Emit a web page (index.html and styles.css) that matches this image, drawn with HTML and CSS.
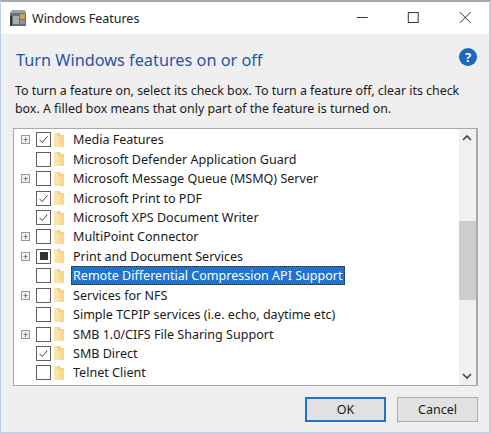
FILE: index.html
```html
<!DOCTYPE html>
<html lang="en">
<head>
<meta charset="utf-8">
<title>Windows Features</title>
<link rel="stylesheet" href="styles.css">
</head>
<body>
<svg class="defs" width="0" height="0" aria-hidden="true">
  <defs>
    <symbol id="folder" viewBox="0 0 12 16">
      <path d="M1 1h6l1 2h3v12H1z" fill="#f3d283"/>
      <path d="M1 1h3v14H1z" fill="#fbe7ae"/>
      <path d="M4 3l3 2v10H4z" fill="#f9e2a2"/>
      <path d="M7 5h4v10H7z" fill="#f6d98f"/>
    </symbol>
  </defs>
</svg>
<div class="window">
  <header class="titlebar">
    <svg class="appicon" viewBox="0 0 18 18">
      <path d="M1 4l2-3h13l1 3z" fill="#98a3b0"/>
      <rect x="1" y="4" width="16" height="13" fill="#6b7076"/>
      <rect x="1" y="7" width="2" height="10" fill="#33373b"/>
      <rect x="4" y="7" width="6" height="8" fill="#a6abb0"/>
      <rect x="11" y="5" width="5" height="5" fill="#d29f52"/>
      <rect x="11" y="11" width="5" height="4" fill="#8d9399"/>
    </svg>
    <span class="title">Windows Features</span>
    <div class="controls">
      <svg class="ctl" viewBox="0 0 52 32"><path d="M22 15.500h11" stroke="#333" fill="none"/></svg>
      <svg class="ctl" viewBox="0 0 52 32"><rect x="22.500" y="10.500" width="10" height="10" stroke="#333" fill="none"/></svg>
      <svg class="ctl" viewBox="0 0 52 32"><path d="M22 10l11 11M33 10l-11 11" stroke="#333" fill="none"/></svg>
    </div>
  </header>
  <main class="content">
    <div class="heading-row">
      <h1 class="heading">Turn Windows features on or off</h1>
      <span class="help">?</span>
    </div>
    <p class="intro">To turn a feature on, select its check box. To turn a feature off, clear its check box. A filled box means that only part of the feature is turned on.</p>
    <div class="tree">
      <ul class="list">
        <li class="row"><span class="exp">+</span><span class="cb on"><svg viewBox="0 0 15 15"><path d="M3 8l3 3 6-7" fill="none" stroke="#333" stroke-width="1.100"/></svg></span><svg class="folder"><use href="#folder"/></svg><span class="label">Media Features</span></li>
        <li class="row"><span class="exp none"></span><span class="cb"></span><svg class="folder"><use href="#folder"/></svg><span class="label">Microsoft Defender Application Guard</span></li>
        <li class="row"><span class="exp">+</span><span class="cb"></span><svg class="folder"><use href="#folder"/></svg><span class="label">Microsoft Message Queue (MSMQ) Server</span></li>
        <li class="row"><span class="exp none"></span><span class="cb on"><svg viewBox="0 0 15 15"><path d="M3 8l3 3 6-7" fill="none" stroke="#333" stroke-width="1.100"/></svg></span><svg class="folder"><use href="#folder"/></svg><span class="label">Microsoft Print to PDF</span></li>
        <li class="row"><span class="exp none"></span><span class="cb on"><svg viewBox="0 0 15 15"><path d="M3 8l3 3 6-7" fill="none" stroke="#333" stroke-width="1.100"/></svg></span><svg class="folder"><use href="#folder"/></svg><span class="label">Microsoft XPS Document Writer</span></li>
        <li class="row"><span class="exp">+</span><span class="cb"></span><svg class="folder"><use href="#folder"/></svg><span class="label">MultiPoint Connector</span></li>
        <li class="row"><span class="exp">+</span><span class="cb part"><i class="fill"></i></span><svg class="folder"><use href="#folder"/></svg><span class="label">Print and Document Services</span></li>
        <li class="row"><span class="exp none"></span><span class="cb"></span><svg class="folder"><use href="#folder"/></svg><span class="label selected">Remote Differential Compression API Support</span></li>
        <li class="row"><span class="exp">+</span><span class="cb"></span><svg class="folder"><use href="#folder"/></svg><span class="label">Services for NFS</span></li>
        <li class="row"><span class="exp none"></span><span class="cb"></span><svg class="folder"><use href="#folder"/></svg><span class="label">Simple TCPIP services (i.e. echo, daytime etc)</span></li>
        <li class="row"><span class="exp">+</span><span class="cb"></span><svg class="folder"><use href="#folder"/></svg><span class="label">SMB 1.0/CIFS File Sharing Support</span></li>
        <li class="row"><span class="exp none"></span><span class="cb on"><svg viewBox="0 0 15 15"><path d="M3 8l3 3 6-7" fill="none" stroke="#333" stroke-width="1.100"/></svg></span><svg class="folder"><use href="#folder"/></svg><span class="label">SMB Direct</span></li>
        <li class="row"><span class="exp none"></span><span class="cb"></span><svg class="folder"><use href="#folder"/></svg><span class="label">Telnet Client</span></li>
        <li class="row"><span class="exp none"></span><span class="cb"></span><svg class="folder"><use href="#folder"/></svg></li>
      </ul>
      <div class="scrollbar">
        <svg class="arrow" viewBox="0 0 16 17"><path d="M4 11l4-4 4 4" fill="none" stroke="#444" stroke-width="1.600"/></svg>
        <div class="track"><div class="thumb"></div></div>
        <svg class="arrow" viewBox="0 0 16 17"><path d="M4 6l4 4 4-4" fill="none" stroke="#444" stroke-width="1.600"/></svg>
      </div>
    </div>
    <div class="buttons">
      <button class="btn default">OK</button>
      <button class="btn">Cancel</button>
    </div>
  </main>
</div>
</body>
</html>
```
FILE: styles.css
```css
* { box-sizing: border-box; }
html, body { margin: 0; padding: 0; width: 491px; height: 434px; overflow: hidden; background: #fff; }
body { font-family: "Noto Sans", "Open Sans", sans-serif; font-size: 12.500px; color: #1a1a1a; }
.defs { position: absolute; }
.window {
  width: 491px; height: 434px; display: flex; flex-direction: column;
  border-top: 2px solid #a9a9a9; border-right: 2px solid #c3d1e6; border-bottom: 2px solid #c3d1e6; border-left: 1px solid #bccdea;
}
.titlebar { height: 32px; flex: none; background: #fff; display: flex; align-items: center; padding-left: 8px; }
.appicon { width: 18px; height: 18px; flex: none; }
.title { margin-left: 5px; font-size: 12.500px; color: #222; }
.controls { margin-left: auto; display: flex; }
.ctl { width: 51.500px; height: 32px; display: block; }
.content { flex: 1; background: #efefef; padding: 0 11px 0 12px; display: flex; flex-direction: column; }
.heading-row { display: flex; align-items: center; justify-content: space-between; height: 42px; padding-top: 6px; }
.heading { margin: 0; font-size: 16.300px; font-weight: 400; color: #1f55a8; padding: 3px 0 0 3px; }
.help {
  width: 18px; height: 18px; border-radius: 50%; background: #1c69bd; color: #fff; flex: none;
  font-size: 13px; font-weight: 700; line-height: 18px; text-align: center; margin-right: 1px; margin-bottom: 2px;
}
.intro { margin: 0; padding-left: 2px; width: 450px; font-size: 12.400px; line-height: 17.500px; height: 48px; padding-top: 6px; color: #1a1a1a; }
.tree {
  height: 258px; width: 465px; flex: none; background: #fff; border: 1px solid #a9a9a9; border-right-width: 2px;
  display: flex; overflow: hidden; margin-top: 4px;
}
.list { flex: 1; min-width: 0; margin: 0; padding: 1.250px 0 0 0; list-style: none; overflow: hidden; }
.row { height: 19.420px; display: flex; align-items: center; }
.exp {
  width: 9px; height: 9px; margin-left: 7px; flex: none; background: #f3f3f3; border: 1px solid #8f9aa8;
  font-size: 9px; line-height: 7px; text-align: center; color: #345;
}
.exp.none { visibility: hidden; }
.cb {
  width: 15px; height: 15px; margin-left: 6px; flex: none; background: #fff; border: 1px solid #5f5f5f;
  display: flex; align-items: center; justify-content: center;
}
.cb svg { width: 13px; height: 13px; display: block; }
.fill { width: 8px; height: 8px; background: #333; display: block; }
.folder { width: 12px; height: 16px; margin-left: 2px; flex: none; }
.label { margin-left: 6px; padding: 0 2px; white-space: nowrap; font-size: 12.550px; line-height: 19px; color: #1a1a1a; }
.selected { background: #1f74d1; color: #fff; outline: 1px dotted #10243c; outline-offset: -1px; }
.scrollbar { width: 17px; flex: none; background: #f0f0f0; display: flex; flex-direction: column; }
.arrow { width: 16px; height: 17px; flex: none; display: block; }
.track { flex: 1; padding-top: 75px; }
.thumb { height: 79px; background: #cdcdcd; }
.buttons { display: flex; justify-content: flex-end; gap: 11px; margin-top: 11px; width: 465px; }
.btn {
  width: 81px; height: 25px; font: inherit; font-size: 12.500px; color: #1a1a1a; background: #e1e1e1; border: 1px solid #adadad; padding: 0;
}
.default { border: 2px solid #1f73cf; }
```
